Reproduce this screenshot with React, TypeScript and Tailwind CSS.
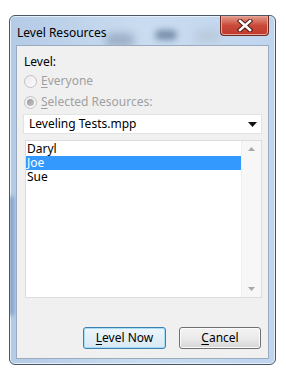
import { type ReactNode } from 'react';

const font = { fontFamily: '"Noto Sans", "Open Sans", sans-serif' };

function Radio({ checked }: { checked?: boolean }) {
  return (
    <span className="flex size-[13px] items-center justify-center rounded-full border border-[#c2c2c2] bg-gradient-to-br from-[#ececec] to-[#fafafa]">
      {checked && <span className="size-[7px] rounded-full bg-gradient-to-br from-[#9a9a9a] to-[#c4c4c4]" />}
    </span>
  );
}

function RadioRow({ checked, mnemonic, rest }: { checked?: boolean; mnemonic: string; rest: string }) {
  return (
    <div className="flex h-4 items-center gap-[4px] pl-[1px] text-[12px] text-[#a0a0a0]">
      <Radio checked={checked} />
      <span>
        <span className="underline underline-offset-2">{mnemonic}</span>
        {rest}
      </span>
    </div>
  );
}

function DialogButton({ children, primary }: { children: ReactNode; primary?: boolean }) {
  return (
    <button
      className={
        primary
          ? 'flex h-[22px] w-[83px] items-center justify-center rounded-[3px] border border-[#3c7fb1] bg-gradient-to-b from-[#eef6fb] to-[#d7e8f3] text-[12px] text-black shadow-[inset_0_0_0_1px_#a6dcf5]'
          : 'flex h-[22px] w-[82px] items-center justify-center rounded-[3px] border border-[#707070] bg-gradient-to-b from-[#f3f3f3] via-[#ebebeb] to-[#d6d6d6] text-[12px] text-black shadow-[inset_0_0_0_1px_#fbfbfb]'
      }>
      {children}
    </button>
  );
}

function ListRow({ children, selected }: { children: ReactNode; selected?: boolean }) {
  return (
    <div
      className={
        selected
          ? 'flex h-[14px] items-center bg-[#3399ff] pl-[1px] leading-none text-white'
          : 'flex h-[14px] items-center pl-[1px] leading-none text-black'
      }>
      {children}
    </div>
  );
}

export default function App() {
  return (
    <div className="h-[377px] w-[286px] bg-white pl-[9px] pt-[15px]" style={font}>
      <div className="relative flex h-[350px] w-[267px] flex-col overflow-hidden rounded-[6px] border border-[#4b5563] bg-gradient-to-r from-[#b4cbe6] via-[#cadcf0] to-[#bfd5ee] shadow-[inset_0_0_0_1px_#e6eff9]">
        {/* blurred glass background */}
        <div className="pointer-events-none absolute left-[95px] top-[17px] h-[14px] w-[30px] rounded-full bg-[#7f93ad] opacity-60 blur-[4px]" />
        <div className="pointer-events-none absolute left-[145px] top-[14px] h-[10px] w-[22px] rounded-full bg-[#56708f] opacity-70 blur-[3px]" />
        <div className="pointer-events-none absolute left-[185px] top-[14px] h-[12px] w-[26px] rounded-full bg-[#b5c3d3] opacity-70 blur-[4px]" />
        <div className="pointer-events-none absolute left-[-2px] top-[180px] h-[120px] w-[6px] rounded-full bg-[#5d82b0] opacity-60 blur-[2px]" />

        {/* title bar */}
        <div className="relative flex h-[29px] items-center justify-between">
          <span className="pl-[7px] pt-[4px] text-[12px] text-black">Level Resources</span>
          <div className="mr-[6px] flex h-[20px] w-[49px] items-center justify-center self-start rounded-b-[4px] border border-t-0 border-[#6b2a22] bg-gradient-to-b from-[#e59b8c] via-[#c9493a] to-[#c0392c] shadow-[inset_0_0_0_1px_#e8a59a]">
            <svg width="16" height="13" viewBox="0 0 16 13">
              <path d="M3 2 L13 11 M13 2 L3 11" stroke="#4a1410" strokeWidth="4.4" strokeLinecap="square" />
              <path d="M3 2 L13 11 M13 2 L3 11" stroke="#ffffff" strokeWidth="2.6" strokeLinecap="square" />
            </svg>
          </div>
        </div>

        {/* client area */}
        <div className="relative mx-[6px] mb-[5px] flex flex-1 flex-col border border-[#9aabbf] bg-[#f0f0f0] px-[6px] pt-[8px]">
          <div className="h-4 pl-[1px] text-[12px] leading-4 text-black">Level:</div>
          <div className="mt-[3px]">
            <RadioRow mnemonic="E" rest="veryone" />
          </div>
          <div className="mt-[5px]">
            <RadioRow checked mnemonic="S" rest="elected Resources:" />
          </div>

          <div className="mt-[4px] flex h-[20px] items-center justify-between border border-[#e3e3e3] bg-white pl-[5px] pr-[4px] text-[12px] text-black">
            <span>Leveling Tests.mpp</span>
            <svg width="9" height="5" viewBox="0 0 9 5">
              <path d="M0 0 H9 L4.5 5 Z" fill="#111" />
            </svg>
          </div>

          <div className="ml-[2px] mt-[6px] flex h-[158px] border border-[#dcdcdc] bg-white">
            <div className="flex-1 pt-[1px] text-[12px]">
              <ListRow>Daryl</ListRow>
              <ListRow selected>Joe</ListRow>
              <ListRow>Sue</ListRow>
            </div>
            <div className="flex w-[20px] flex-col items-center justify-between border-l border-[#f0f0f0] bg-[#f7f7f7] py-[6px]">
              <svg width="7" height="4" viewBox="0 0 7 4">
                <path d="M0 4 L3.5 0 L7 4 Z" fill="#a8a8a8" />
              </svg>
              <svg width="7" height="4" viewBox="0 0 7 4">
                <path d="M0 0 H7 L3.5 4 Z" fill="#a8a8a8" />
              </svg>
            </div>
          </div>

          <div className="mt-[29px] flex justify-end gap-[13px] pr-[1px]">
            <DialogButton primary>
              <span>
                <span className="underline underline-offset-2">L</span>evel Now
              </span>
            </DialogButton>
            <DialogButton>
              <span>
                <span className="underline underline-offset-2">C</span>ancel
              </span>
            </DialogButton>
          </div>
        </div>
      </div>
    </div>
  );
}
